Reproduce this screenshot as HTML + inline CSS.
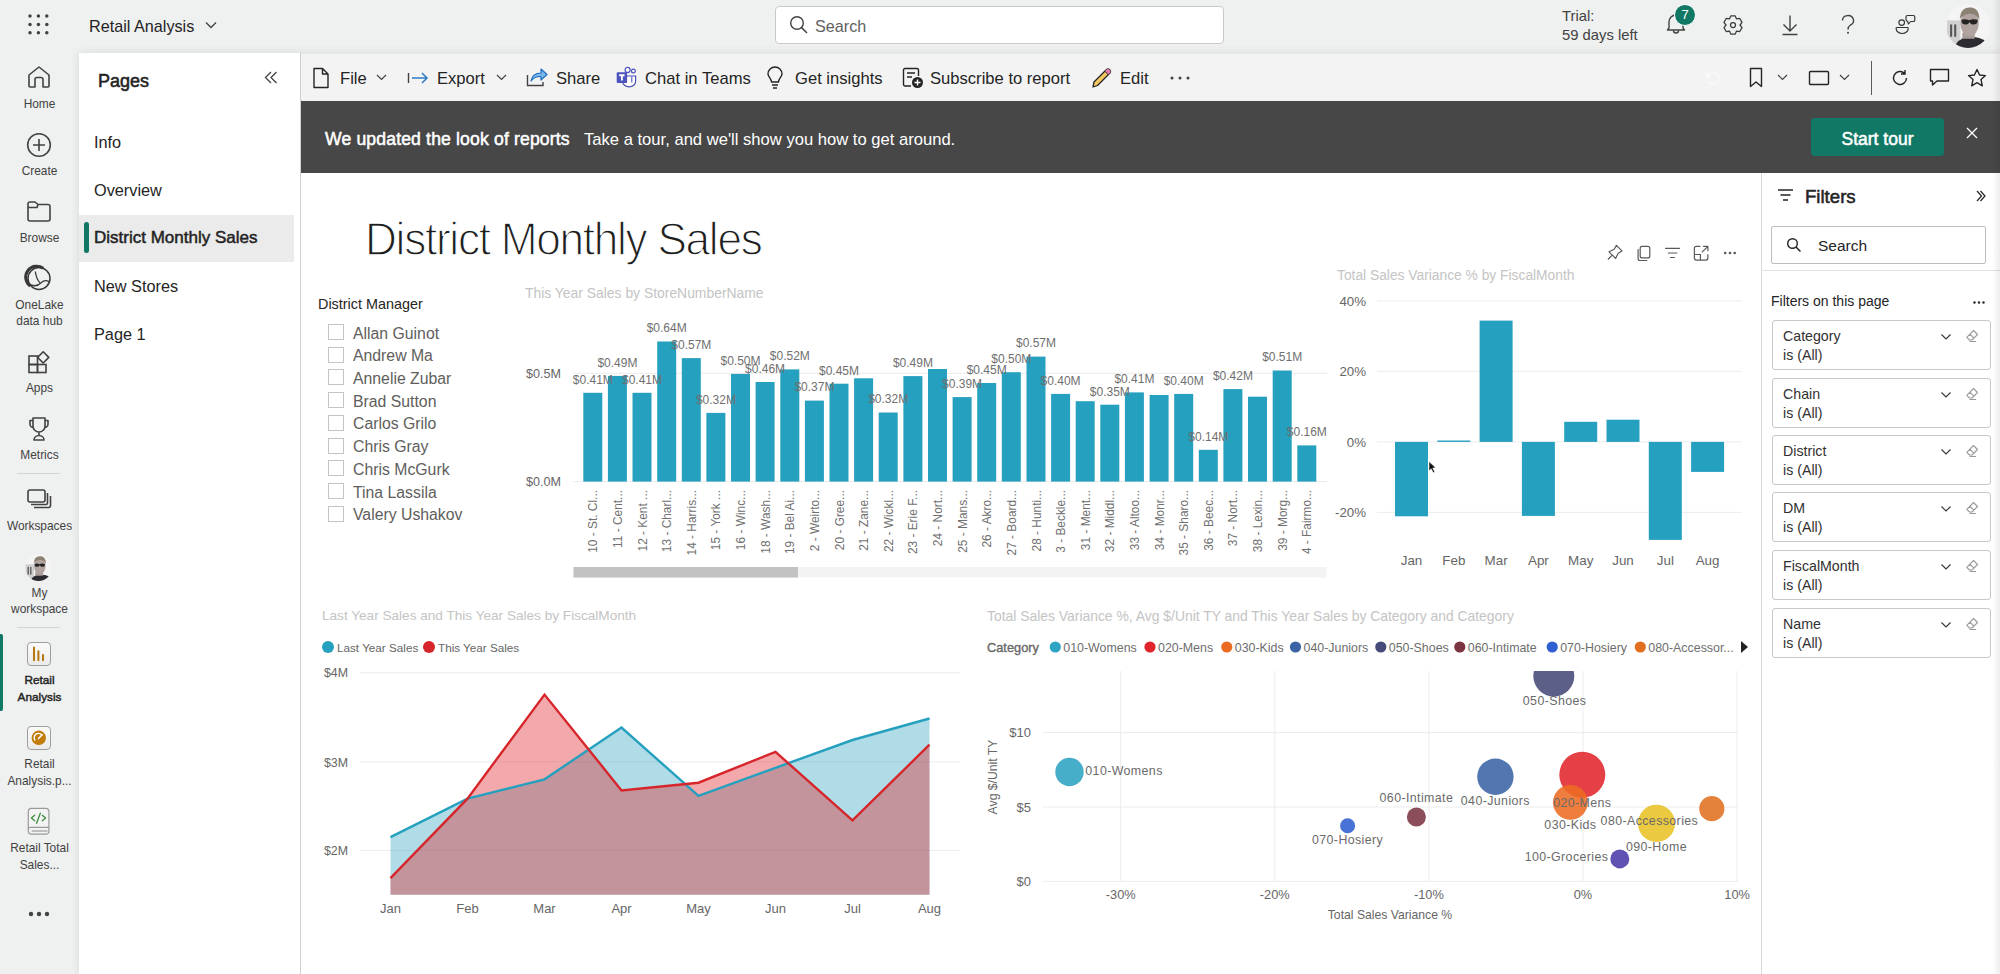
<!DOCTYPE html>
<html><head><meta charset="utf-8">
<style>
*{box-sizing:border-box;margin:0;padding:0}
html,body{width:2000px;height:974px;overflow:hidden;background:#eff0f0;font-family:"Liberation Sans",sans-serif;color:#242424}
.a{position:absolute;white-space:nowrap}
svg{position:absolute;overflow:visible}
#topbar{position:absolute;left:0;top:0;width:2000px;height:53px;background:#eff0f0}
#leftnav{position:absolute;left:0;top:53px;width:79px;height:921px;background:#eff0f0}
#pages{position:absolute;left:79px;top:53px;width:222px;height:921px;background:#fff}
#shadow{position:absolute;left:79px;top:53px;width:1921px;height:921px;box-shadow:0 0 9px rgba(0,0,0,.10)}
#divider{position:absolute;left:300px;top:53px;width:1.5px;height:921px;background:#d0d0d0}
#toolbar{position:absolute;left:301px;top:53px;width:1699px;height:47px;background:#f3f3f3;border-top:1px solid #e6e6e6}
#banner{position:absolute;left:301px;top:101px;width:1699px;height:72px;background:#474747}
#canvas{position:absolute;left:301px;top:173px;width:1460px;height:801px;background:#fff}
#filters{position:absolute;left:1761px;top:173px;width:239px;height:801px;background:#fff;border-left:1px solid #d9d9d9}
.nl{margin-top:0.8px;font-size:11.9px;color:#424242;text-align:center;width:79px;left:0;line-height:16px}
.pg{font-size:16.3px;color:#242424;left:94px}
.tb{font-size:16.6px;color:#242424;top:69px}
.fc{position:absolute;left:1772px;width:219px;height:50px;border:1px solid #c8c8c8;border-radius:3px;background:#fff}
.fc .t1{position:absolute;left:10px;top:7px;font-size:14.2px;color:#323130}
.fc .t2{position:absolute;left:10px;top:26px;font-size:14.2px;color:#323130}
.sl{font-size:15.8px;color:#605e5c;left:353px}
.cb{position:absolute;left:328px;width:16px;height:16px;border:1px solid #c4c4c4;background:#fff}
.ax{font-size:13px;color:#666;font-family:"Liberation Sans",sans-serif}
.dl{font-size:12.5px;fill:#666}
.vt{font-size:13.9px;color:#c2c2c2}
</style></head><body>
<div id="topbar"></div>
<div id="leftnav"></div>
<div id="shadow"></div>
<div id="pages"></div>
<div id="divider"></div>
<div id="toolbar"></div>
<div id="banner"></div>
<div id="canvas"></div>
<div id="filters"></div>

<!-- TOP BAR -->
<svg style="left:28px;top:14px" width="21" height="21" viewBox="0 0 21 21" fill="#424242"><circle cx="2.0" cy="2.0" r="1.75"/><circle cx="10.4" cy="2.0" r="1.75"/><circle cx="18.8" cy="2.0" r="1.75"/><circle cx="2.0" cy="10.4" r="1.75"/><circle cx="10.4" cy="10.4" r="1.75"/><circle cx="18.8" cy="10.4" r="1.75"/><circle cx="2.0" cy="18.8" r="1.75"/><circle cx="10.4" cy="18.8" r="1.75"/><circle cx="18.8" cy="18.8" r="1.75"/></svg>
<div class="a" style="left:89px;top:17px;font-size:16.2px;color:#242424">Retail Analysis</div>
<svg style="left:205px;top:21px" width="12" height="8" viewBox="0 0 12 8"><path d="M1 1.5 L6 6.5 L11 1.5" fill="none" stroke="#424242" stroke-width="1.3"/></svg>
<div class="a" style="left:775px;top:6px;width:449px;height:38px;background:#fff;border:1px solid #c9c9c9;border-radius:4px"></div>
<svg style="left:789px;top:15px" width="20" height="20" viewBox="0 0 20 20"><circle cx="8" cy="8" r="6.3" fill="none" stroke="#424242" stroke-width="1.4"/><path d="M12.6 12.6 L18 18" stroke="#424242" stroke-width="1.5"/></svg>
<div class="a" style="left:815px;top:17px;font-size:16.2px;color:#616161">Search</div>
<div class="a" style="left:1562px;top:7px;font-size:14.8px;color:#424242;line-height:19px">Trial:<br>59 days left</div>

<!-- top right icons -->
<svg style="left:1664px;top:11px" width="24" height="24" viewBox="0 0 24 24"><path d="M5 17 V11 a7 7 0 0 1 14 0 V17 L20.5 19 H3.5 Z" fill="none" stroke="#424242" stroke-width="1.4" stroke-linejoin="round"/><path d="M9.5 19.5 a2.5 2.5 0 0 0 5 0" fill="none" stroke="#424242" stroke-width="1.4"/></svg>
<div class="a" style="left:1674px;top:3.5px;width:22px;height:22px;border-radius:50%;background:#117865;border:1.5px solid #fff;color:#fff;font-size:13px;text-align:center;line-height:19px">7</div>
<svg style="left:1721px;top:12.5px" width="24" height="24" viewBox="0 0 24 24"><path d="M8.50 5.94 L9.73 2.88 L14.27 2.88 L15.50 5.94 L18.76 5.47 L21.04 9.41 L19.00 12.00 L21.04 14.59 L18.76 18.53 L15.50 18.06 L14.27 21.12 L9.73 21.12 L8.50 18.06 L5.24 18.53 L2.96 14.59 L5.00 12.00 L2.96 9.41 L5.24 5.47 Z" fill="none" stroke="#3a3a3a" stroke-width="1.25" stroke-linejoin="round"/><circle cx="12" cy="12" r="2.5" fill="none" stroke="#3a3a3a" stroke-width="1.25"/></svg>
<svg style="left:1781px;top:14px" width="18" height="22" viewBox="0 0 18 22"><path d="M9 1.5 V17 M2.5 10.5 L9 17 L15.5 10.5 M1.5 20.5 H16.5" fill="none" stroke="#424242" stroke-width="1.4"/></svg>
<svg style="left:1840px;top:15px" width="16" height="20" viewBox="0 0 16 20"><path d="M2.5 5.5 a5.5 5 0 1 1 8 4.5 c-2 1.2 -2.5 2 -2.5 4.5" fill="none" stroke="#424242" stroke-width="1.4"/><circle cx="8" cy="17.8" r="1" fill="#424242"/></svg>
<svg style="left:1894px;top:13px" width="24" height="24" viewBox="0 0 24 24"><g fill="none" stroke="#333" stroke-width="1.15" stroke-linejoin="round"><circle cx="7.7" cy="9.6" r="2.8"/><path d="M3 14.5 H13.3 a.9 .9 0 0 1 .9 .9 C14.2 18.3 11.6 20.5 8.2 20.5 C4.8 20.5 2.1 18.3 2.1 15.4 a.9 .9 0 0 1 .9 -.9 Z"/><path d="M13.6 2.5 H19.2 a1.6 1.6 0 0 1 1.6 1.6 V6.9 a1.6 1.6 0 0 1 -1.6 1.6 H16.6 L14.5 11 L13.6 8.3 a1.7 1.7 0 0 1 -1.6 -1.7 V4.1 a1.6 1.6 0 0 1 1.6 -1.6 Z"/></g></svg>
<svg style="left:1946px;top:4px" width="43" height="43" viewBox="0 0 42 42"><defs><clipPath id="av"><circle cx="21.5" cy="21.5" r="21.5"/></clipPath></defs><g clip-path="url(#av)"><rect width="42" height="42" fill="#f4f4f4"/><rect x="1" y="16" width="13" height="26" fill="#d0d0d0"/><rect x="4" y="20" width="2" height="12" fill="#555"/><rect x="8" y="20" width="2" height="12" fill="#555"/><path d="M8 44 Q10 34 22 32 Q34 32 40 37 V44 Z" fill="#2b2b30"/><path d="M16 34 V28 H28 V34 Z" fill="#a89c98"/><ellipse cx="23" cy="19" rx="9" ry="12.5" fill="#b0a3a0"/><path d="M13.5 15 Q14 3 24 3.5 Q33 4 32.5 16 Q30 9 23 9.5 Q16 10 13.5 15 Z" fill="#8c8274"/><path d="M15 15.5 Q18.5 14 22.5 15.8 Q26.5 14 31 15.5 Q31 20 27.5 20 Q24 20 23 17.5 Q22 20 18.5 20 Q15 20 15 15.5 Z" fill="#242424"/></g></svg>

<!-- LEFT NAV -->
<svg style="left:27px;top:65px" width="24" height="24" viewBox="0 0 24 24"><path d="M2 10 L12 2 L22 10 V21 a1 1 0 0 1 -1 1 H16 V14.5 a2 2 0 0 0 -2 -2 H10 a2 2 0 0 0 -2 2 V22 H3 a1 1 0 0 1 -1 -1 Z" fill="none" stroke="#424242" stroke-width="1.6" stroke-linejoin="round"/></svg>
<div class="a nl" style="top:95px">Home</div>
<svg style="left:26px;top:132px" width="26" height="26" viewBox="0 0 26 26"><circle cx="13" cy="13" r="11.3" fill="none" stroke="#424242" stroke-width="1.6"/><path d="M13 7 V19 M7 13 H19" stroke="#424242" stroke-width="1.6"/></svg>
<div class="a nl" style="top:162px">Create</div>
<svg style="left:26px;top:199px" width="26" height="24" viewBox="0 0 26 24"><path d="M2 5 a2 2 0 0 1 2 -2 H9 L12 5.5 H22 a2 2 0 0 1 2 2 V20 a2 2 0 0 1 -2 2 H4 a2 2 0 0 1 -2 -2 Z M2 8.5 H11 L12 5.5" fill="none" stroke="#424242" stroke-width="1.6" stroke-linejoin="round"/></svg>
<div class="a nl" style="top:229px">Browse</div>
<svg style="left:26px;top:265px" width="26" height="26" viewBox="0 0 26 26"><g fill="none" stroke="#383838"><circle cx="13" cy="13.5" r="11" stroke-width="1.5"/><path d="M4.2 21 A10 10 0 0 1 17.2 3.3" stroke-width="3"/><path d="M9.3 6.5 C10 11 11.5 15.5 14 17.8" stroke-width="1.3"/><path d="M4.5 19.6 C9 22 13 20 15.5 17.5 C17.5 15.5 20 15 23.3 16.8" stroke-width="1.3"/></g></svg>
<div class="a nl" style="top:296px">OneLake</div>
<div class="a nl" style="top:312px">data hub</div>
<svg style="left:27px;top:350px" width="24" height="24" viewBox="0 0 24 24"><path d="M2 8 H10.5 V12 H2 Z" fill="none"/><rect x="2" y="6" width="8.5" height="8.5" fill="none" stroke="#424242" stroke-width="1.6"/><rect x="2" y="14.5" width="8.5" height="8" fill="none" stroke="#424242" stroke-width="1.6"/><rect x="10.5" y="14.5" width="8.5" height="8" fill="none" stroke="#424242" stroke-width="1.6"/><path d="M16.2 1.8 L21.8 7.4 L16.2 13 L10.6 7.4 Z" fill="none" stroke="#424242" stroke-width="1.6" stroke-linejoin="round"/></svg>
<div class="a nl" style="top:379px">Apps</div>
<svg style="left:27px;top:416px" width="24" height="26" viewBox="0 0 24 26"><path d="M6 2 H18 V10 a6 6 0 0 1 -12 0 Z M6 4.5 H3 V8 a3.5 3.5 0 0 0 3.5 3.5 M18 4.5 H21 V8 a3.5 3.5 0 0 1 -3.5 3.5 M12 16 V19.5 M7 24 a5 4.5 0 0 1 10 0 Z" fill="none" stroke="#424242" stroke-width="1.6" stroke-linejoin="round"/></svg>
<div class="a nl" style="top:446px">Metrics</div>
<div class="a" style="left:17px;top:473px;width:43px;height:1px;background:#d4d4d4"></div>
<svg style="left:26px;top:487px" width="26" height="24" viewBox="0 0 26 24"><rect x="2" y="3" width="17" height="12" rx="2" fill="none" stroke="#424242" stroke-width="1.6"/><path d="M21.5 6 V16 a1.5 1.5 0 0 1 -1.5 1.5 H5 M24.5 9 V18.5 a2 2 0 0 1 -2 2 H8" fill="none" stroke="#424242" stroke-width="1.6"/></svg>
<div class="a nl" style="top:517px">Workspaces</div>
<svg style="left:25px;top:554px" width="27" height="27" viewBox="0 0 42 42"><defs><clipPath id="av2"><circle cx="21" cy="21" r="21"/></clipPath></defs><g clip-path="url(#av2)"><rect width="42" height="42" fill="#f4f4f4"/><rect x="1" y="16" width="13" height="26" fill="#d0d0d0"/><rect x="4" y="20" width="2" height="12" fill="#555"/><rect x="8" y="20" width="2" height="12" fill="#555"/><path d="M8 44 Q10 34 22 32 Q34 32 40 37 V44 Z" fill="#2b2b30"/><path d="M16 34 V28 H28 V34 Z" fill="#a89c98"/><ellipse cx="23" cy="19" rx="9" ry="12.5" fill="#b0a3a0"/><path d="M13.5 15 Q14 3 24 3.5 Q33 4 32.5 16 Q30 9 23 9.5 Q16 10 13.5 15 Z" fill="#8c8274"/><path d="M15 15.5 Q18.5 14 22.5 15.8 Q26.5 14 31 15.5 Q31 20 27.5 20 Q24 20 23 17.5 Q22 20 18.5 20 Q15 20 15 15.5 Z" fill="#242424"/></g></svg>
<div class="a nl" style="top:584px">My</div>
<div class="a nl" style="top:600px">workspace</div>
<div class="a" style="left:17px;top:627px;width:43px;height:1px;background:#d4d4d4"></div>
<div class="a" style="left:0;top:634px;width:2.5px;height:77px;background:#117865;border-radius:0 2px 2px 0"></div>
<div class="a" style="left:27px;top:642px;width:23.5px;height:23.5px;border:1.2px solid #9e9e9e;border-radius:4px;background:linear-gradient(#fbfbfb,#ebebeb)"></div><svg style="left:27px;top:642px" width="24" height="24" viewBox="0 0 24 24"><path d="M7 5.6 V18.2 M11.4 9.2 V18.2 M16 13 V18.2" stroke="#b8760e" stroke-width="2" stroke-linecap="round"/></svg>
<div class="a nl" style="top:671px;-webkit-text-stroke:0.45px #242424;color:#242424;font-size:11.8px">Retail</div>
<div class="a nl" style="top:688px;-webkit-text-stroke:0.45px #242424;color:#242424;font-size:11.8px">Analysis</div>
<div class="a" style="left:27px;top:726px;width:23.5px;height:23.5px;border:1.2px solid #9e9e9e;border-radius:4px;background:linear-gradient(#fbfbfb,#ebebeb)"></div><svg style="left:27px;top:726px" width="24" height="24" viewBox="0 0 24 24"><circle cx="11.8" cy="11.8" r="7.2" fill="#c27d0c"/><path d="M8.2 14.5 a4.3 4.3 0 0 1 6.6 -5.6" fill="none" stroke="#fff" stroke-width="1.4"/><path d="M11.5 12.5 L15.2 8.8" stroke="#fff" stroke-width="1.5" stroke-linecap="round"/></svg>
<div class="a nl" style="top:755px">Retail</div>
<div class="a nl" style="top:772px">Analysis.p...</div>
<svg style="left:26px;top:806px" width="26" height="30" viewBox="0 0 26 30"><rect x="2.3" y="2.4" width="20.6" height="25.8" rx="3.2" fill="#f3f3f3" stroke="#9a9a9a" stroke-width="1.2"/><path d="M2.3 22.5 Q2.5 21.3 4.5 21.3 H22.9" fill="none" stroke="#9a9a9a" stroke-width="1.2"/><path d="M5.8 25 H21.5" stroke="#9a9a9a" stroke-width="1.2"/><path d="M8.7 9.3 L5.4 12 L8.7 14.7 M16.3 9.3 L19.6 12 L16.3 14.7 M14.3 7.2 L10.6 17.3" fill="none" stroke="#3c8c3c" stroke-width="1.3" stroke-linecap="round" stroke-linejoin="round"/></svg>
<div class="a nl" style="top:839px">Retail Total</div>
<div class="a nl" style="top:856px">Sales...</div>
<svg style="left:28px;top:910px" width="22" height="8" viewBox="0 0 22 8"><circle cx="3" cy="4" r="2.2" fill="#424242"/><circle cx="11" cy="4" r="2.2" fill="#424242"/><circle cx="19" cy="4" r="2.2" fill="#424242"/></svg>

<!-- PAGES PANEL -->
<div class="a" style="left:98px;top:71px;font-size:18px;-webkit-text-stroke:0.55px #242424;color:#242424">Pages</div>
<svg style="left:264px;top:71px" width="14" height="13" viewBox="0 0 14 13"><path d="M7 1 L1.5 6.5 L7 12 M12.5 1 L7 6.5 L12.5 12" fill="none" stroke="#424242" stroke-width="1.3"/></svg>
<div class="a pg" style="top:133px">Info</div>
<div class="a pg" style="top:181px">Overview</div>
<div class="a" style="left:79px;top:215px;width:215px;height:47px;background:#ebebeb"></div>
<div class="a" style="left:84px;top:222px;width:5px;height:31px;background:#117865;border-radius:3px"></div>
<div class="a pg" style="top:228px;font-size:17px;-webkit-text-stroke:0.5px #242424">District Monthly Sales</div>
<div class="a pg" style="top:277px">New Stores</div>
<div class="a pg" style="top:325px">Page 1</div>

<!-- TOOLBAR -->
<svg style="left:312px;top:67px" width="18" height="22" viewBox="0 0 18 22"><path d="M2 1.5 H10.5 L16 7 V20.5 H2 Z M10.5 1.5 V7 H16" fill="none" stroke="#242424" stroke-width="1.4" stroke-linejoin="round"/></svg>
<div class="a tb" style="left:340px">File</div>
<svg style="left:376px;top:74px" width="11" height="7" viewBox="0 0 11 7"><path d="M1 1 L5.5 5.5 L10 1" fill="none" stroke="#424242" stroke-width="1.2"/></svg>
<svg style="left:407px;top:70px" width="22" height="16" viewBox="0 0 22 16"><path d="M1.5 3 V13" stroke="#424242" stroke-width="1.4"/><path d="M5 8 H20 M15 3 L20 8 L15 13" fill="none" stroke="#2f7cc4" stroke-width="1.5"/></svg>
<div class="a tb" style="left:437px">Export</div>
<svg style="left:496px;top:74px" width="11" height="7" viewBox="0 0 11 7"><path d="M1 1 L5.5 5.5 L10 1" fill="none" stroke="#424242" stroke-width="1.2"/></svg>
<svg style="left:526px;top:67px" width="22" height="20" viewBox="0 0 22 20"><path d="M1.5 8 V18.5 H17 V15" fill="none" stroke="#424242" stroke-width="1.4"/><path d="M5 14 C6 8 10 6 15 6 V2 L21 7.5 L15 13 V9.5 C10 9.5 7 11 5 14 Z" fill="#7bb8ea" stroke="#1f6fc0" stroke-width="1.2" stroke-linejoin="round"/></svg>
<div class="a tb" style="left:556px">Share</div>
<svg style="left:615px;top:66px" width="22" height="22" viewBox="0 0 22 22"><circle cx="12.6" cy="3.9" r="2.5" fill="#fff" stroke="#4b53bc" stroke-width="1.2"/><circle cx="18.4" cy="5" r="1.9" fill="#fff" stroke="#4b53bc" stroke-width="1.2"/><path d="M7.5 10 H20.6 V15.5 a6.5 5.3 0 0 1 -13 0 Z" fill="#fff" stroke="#4b53bc" stroke-width="1.2"/><path d="M16.8 10.5 V16.5" stroke="#4b53bc" stroke-width="1.1"/><rect x="1.7" y="6.2" width="10.4" height="10.8" rx="1" fill="#4b53bc"/><path d="M4.2 9.2 H9.6 M6.9 9.2 V14.6" stroke="#fff" stroke-width="1.9"/></svg>
<div class="a tb" style="left:645px">Chat in Teams</div>
<svg style="left:766px;top:67px" width="18" height="22" viewBox="0 0 18 22"><path d="M5.5 15 C5.5 11.5 2 10 2 7 a7 7 0 0 1 14 0 c0 3 -3.5 4.5 -3.5 8 Z M6 18 H12 M7 21 H11" fill="none" stroke="#242424" stroke-width="1.4" stroke-linejoin="round"/></svg>
<div class="a tb" style="left:795px">Get insights</div>
<svg style="left:902px;top:67px" width="22" height="22" viewBox="0 0 22 22"><path d="M9 19 H3 a1.5 1.5 0 0 1 -1.5 -1.5 V3 a1.5 1.5 0 0 1 1.5 -1.5 H15 a1.5 1.5 0 0 1 1.5 1.5 V9 M5 6 H13 M5 10 H10" fill="none" stroke="#242424" stroke-width="1.4"/><circle cx="15.5" cy="15.5" r="5.5" fill="#242424"/><path d="M15.5 12.5 V18.5 M12.5 15.5 H18.5" stroke="#fff" stroke-width="1.4"/></svg>
<div class="a tb" style="left:930px">Subscribe to report</div>
<svg style="left:1091px;top:67px" width="22" height="22" viewBox="0 0 22 22"><path d="M2 20 L3 15 L15.5 2.5 a2.5 2.5 0 0 1 3.5 3.5 L6.5 18.5 Z" fill="#f7c862" stroke="#242424" stroke-width="1.3" stroke-linejoin="round"/><path d="M14 4 L17.5 7.5" stroke="#242424" stroke-width="1.3"/><path d="M15.5 2.5 a2.5 2.5 0 0 1 3.5 3.5 L17.5 7.5 L14 4 Z" fill="#e07bb0"/></svg>
<div class="a tb" style="left:1120px">Edit</div>
<svg style="left:1170px;top:76px" width="20" height="4" viewBox="0 0 20 4"><circle cx="2" cy="2" r="1.5" fill="#424242"/><circle cx="10" cy="2" r="1.5" fill="#424242"/><circle cx="18" cy="2" r="1.5" fill="#424242"/></svg>

<svg style="left:1705px;top:70px" width="16" height="16" viewBox="0 0 16 16"><path d="M2 2.5 L1.5 7 L6 6.5 M2 6.5 a6 6 0 1 1 1 5" fill="none" stroke="#fafafa" stroke-width="1.2"/></svg>
<svg style="left:1749px;top:67px" width="14" height="21" viewBox="0 0 14 21"><path d="M1.5 1.5 H12.5 V19.5 L7 15 L1.5 19.5 Z" fill="none" stroke="#242424" stroke-width="1.4" stroke-linejoin="round"/></svg>
<svg style="left:1777px;top:74px" width="11" height="7" viewBox="0 0 11 7"><path d="M1 1 L5.5 5.5 L10 1" fill="none" stroke="#424242" stroke-width="1.2"/></svg>
<svg style="left:1808px;top:70px" width="22" height="16" viewBox="0 0 22 16"><rect x="1.5" y="1.5" width="19" height="13" rx="1" fill="none" stroke="#242424" stroke-width="1.4"/></svg>
<svg style="left:1839px;top:74px" width="11" height="7" viewBox="0 0 11 7"><path d="M1 1 L5.5 5.5 L10 1" fill="none" stroke="#424242" stroke-width="1.2"/></svg>
<div class="a" style="left:1870.5px;top:61px;width:1.2px;height:34px;background:#5a5a5a"></div>
<svg style="left:1891px;top:69px" width="18" height="18" viewBox="0 0 18 18"><path d="M15.5 9 a6.5 6.5 0 1 1 -2 -4.7 M14 1 V5 H10" fill="none" stroke="#242424" stroke-width="1.4"/></svg>
<svg style="left:1929px;top:68px" width="21" height="19" viewBox="0 0 21 19"><path d="M1.5 1.5 H19.5 V13 H8 L3.5 17 V13 H1.5 Z" fill="none" stroke="#242424" stroke-width="1.4" stroke-linejoin="round"/></svg>
<svg style="left:1967px;top:68px" width="20" height="20" viewBox="0 0 20 20"><path d="M10 1.5 L12.6 7 L18.5 7.6 L14 11.6 L15.3 17.8 L10 14.7 L4.7 17.8 L6 11.6 L1.5 7.6 L7.4 7 Z" fill="none" stroke="#242424" stroke-width="1.4" stroke-linejoin="round"/></svg>

<!-- BANNER -->
<div class="a" style="left:325px;top:129px;font-size:17.6px;letter-spacing:0.15px;-webkit-text-stroke:0.5px #fff;color:#fff">We updated the look of reports</div>
<div class="a" style="left:584px;top:130px;font-size:16.6px;color:#fff">Take a tour, and we'll show you how to get around.</div>
<div class="a" style="left:1811px;top:118px;width:133px;height:38px;background:#117865;border-radius:4px;color:#fff;font-size:17.5px;-webkit-text-stroke:0.5px #fff;text-align:center;line-height:42px">Start tour</div>
<svg style="left:1966px;top:127px" width="12" height="12" viewBox="0 0 12 12"><path d="M1 1 L11 11 M11 1 L1 11" stroke="#fff" stroke-width="1.3"/></svg>

<!-- FILTERS -->
<svg style="left:1777px;top:188px" width="17" height="14" viewBox="0 0 17 14"><path d="M1 2 H16 M3.5 7 H13.5 M6 12 H11" stroke="#242424" stroke-width="1.6"/></svg>
<div class="a" style="left:1805px;top:186px;font-size:18.6px;-webkit-text-stroke:0.55px #242424;color:#242424">Filters</div>
<svg style="left:1976px;top:190px" width="10" height="12" viewBox="0 0 10 12"><path d="M1 1 L5.5 6 L1 11 M4.5 1 L9 6 L4.5 11" fill="none" stroke="#242424" stroke-width="1.2"/></svg>
<div class="a" style="left:1771px;top:226px;width:215px;height:38px;border:1px solid #bdbdbd;border-radius:2px;background:#fff"></div>
<svg style="left:1786px;top:237px" width="16" height="16" viewBox="0 0 16 16"><circle cx="6.5" cy="6.5" r="4.8" fill="none" stroke="#242424" stroke-width="1.4"/><path d="M10 10 L14.5 14.5" stroke="#242424" stroke-width="1.5"/></svg>
<div class="a" style="left:1818px;top:237px;font-size:15.5px;color:#242424">Search</div>
<div class="a" style="left:1761px;top:270px;width:239px;height:1px;background:#e1e1e1"></div>
<div class="a" style="left:1771px;top:293px;font-size:14px;color:#242424">Filters on this page</div>
<svg style="left:1973px;top:301px" width="12" height="3" viewBox="0 0 12 3"><circle cx="1.5" cy="1.5" r="1.2" fill="#242424"/><circle cx="6" cy="1.5" r="1.2" fill="#242424"/><circle cx="10.5" cy="1.5" r="1.2" fill="#242424"/></svg>
<div class="fc" style="top:320px"><div class="t1 a">Category</div><div class="t2 a">is (All)</div><svg style="left:167px;top:12px" width="12" height="8" viewBox="0 0 12 8"><path d="M1.5 1.5 L6 6 L10.5 1.5" fill="none" stroke="#333" stroke-width="1.1"/></svg><svg style="left:192px;top:8px" width="14" height="14" viewBox="0 0 14 14"><path d="M8.5 1.5 L12.5 5.5 L7 11 H4.5 L1.8 8.3 Z M4.8 5.2 L8.8 9.2 M4.5 12.5 H11" fill="none" stroke="#9a9a9a" stroke-width="1.1" stroke-linejoin="round"/></svg></div>
<div class="fc" style="top:378px"><div class="t1 a">Chain</div><div class="t2 a">is (All)</div><svg style="left:167px;top:12px" width="12" height="8" viewBox="0 0 12 8"><path d="M1.5 1.5 L6 6 L10.5 1.5" fill="none" stroke="#333" stroke-width="1.1"/></svg><svg style="left:192px;top:8px" width="14" height="14" viewBox="0 0 14 14"><path d="M8.5 1.5 L12.5 5.5 L7 11 H4.5 L1.8 8.3 Z M4.8 5.2 L8.8 9.2 M4.5 12.5 H11" fill="none" stroke="#9a9a9a" stroke-width="1.1" stroke-linejoin="round"/></svg></div>
<div class="fc" style="top:435px"><div class="t1 a">District</div><div class="t2 a">is (All)</div><svg style="left:167px;top:12px" width="12" height="8" viewBox="0 0 12 8"><path d="M1.5 1.5 L6 6 L10.5 1.5" fill="none" stroke="#333" stroke-width="1.1"/></svg><svg style="left:192px;top:8px" width="14" height="14" viewBox="0 0 14 14"><path d="M8.5 1.5 L12.5 5.5 L7 11 H4.5 L1.8 8.3 Z M4.8 5.2 L8.8 9.2 M4.5 12.5 H11" fill="none" stroke="#9a9a9a" stroke-width="1.1" stroke-linejoin="round"/></svg></div>
<div class="fc" style="top:492px"><div class="t1 a">DM</div><div class="t2 a">is (All)</div><svg style="left:167px;top:12px" width="12" height="8" viewBox="0 0 12 8"><path d="M1.5 1.5 L6 6 L10.5 1.5" fill="none" stroke="#333" stroke-width="1.1"/></svg><svg style="left:192px;top:8px" width="14" height="14" viewBox="0 0 14 14"><path d="M8.5 1.5 L12.5 5.5 L7 11 H4.5 L1.8 8.3 Z M4.8 5.2 L8.8 9.2 M4.5 12.5 H11" fill="none" stroke="#9a9a9a" stroke-width="1.1" stroke-linejoin="round"/></svg></div>
<div class="fc" style="top:550px"><div class="t1 a">FiscalMonth</div><div class="t2 a">is (All)</div><svg style="left:167px;top:12px" width="12" height="8" viewBox="0 0 12 8"><path d="M1.5 1.5 L6 6 L10.5 1.5" fill="none" stroke="#333" stroke-width="1.1"/></svg><svg style="left:192px;top:8px" width="14" height="14" viewBox="0 0 14 14"><path d="M8.5 1.5 L12.5 5.5 L7 11 H4.5 L1.8 8.3 Z M4.8 5.2 L8.8 9.2 M4.5 12.5 H11" fill="none" stroke="#9a9a9a" stroke-width="1.1" stroke-linejoin="round"/></svg></div>
<div class="fc" style="top:608px"><div class="t1 a">Name</div><div class="t2 a">is (All)</div><svg style="left:167px;top:12px" width="12" height="8" viewBox="0 0 12 8"><path d="M1.5 1.5 L6 6 L10.5 1.5" fill="none" stroke="#333" stroke-width="1.1"/></svg><svg style="left:192px;top:8px" width="14" height="14" viewBox="0 0 14 14"><path d="M8.5 1.5 L12.5 5.5 L7 11 H4.5 L1.8 8.3 Z M4.8 5.2 L8.8 9.2 M4.5 12.5 H11" fill="none" stroke="#9a9a9a" stroke-width="1.1" stroke-linejoin="round"/></svg></div>
<div class="a" style="left:1992px;top:0;width:8px;height:974px;background:linear-gradient(to right,rgba(0,0,0,0),rgba(0,0,0,.07))"></div>
<!-- CHARTS -->
<div class="a" style="left:365.3px;top:211.8px;font-size:46.5px;letter-spacing:-1.35px;color:#1e1e1e;-webkit-text-stroke:1.3px #fff;transform:scaleX(0.95);transform-origin:0 0">District Monthly Sales</div>
<div class="a" style="left:318px;top:296px;font-size:14.4px;color:#252423">District Manager</div>
<div class="cb" style="top:324.0px"></div>
<div class="a sl" style="top:324.5px">Allan Guinot</div>
<div class="cb" style="top:346.7px"></div>
<div class="a sl" style="top:347.2px">Andrew Ma</div>
<div class="cb" style="top:369.4px"></div>
<div class="a sl" style="top:369.9px">Annelie Zubar</div>
<div class="cb" style="top:392.2px"></div>
<div class="a sl" style="top:392.7px">Brad Sutton</div>
<div class="cb" style="top:414.9px"></div>
<div class="a sl" style="top:415.4px">Carlos Grilo</div>
<div class="cb" style="top:437.6px"></div>
<div class="a sl" style="top:438.1px">Chris Gray</div>
<div class="cb" style="top:460.3px"></div>
<div class="a sl" style="top:460.8px">Chris McGurk</div>
<div class="cb" style="top:483.0px"></div>
<div class="a sl" style="top:483.5px">Tina Lassila</div>
<div class="cb" style="top:505.8px"></div>
<div class="a sl" style="top:506.3px">Valery Ushakov</div>
<svg style="left:0;top:0" width="2000" height="974" viewBox="0 0 2000 974" font-family="Liberation Sans, sans-serif">
<text x="525" y="298" font-size="13.9" fill="#c4c4c4">This Year Sales by StoreNumberName</text>
<line x1="573" y1="373.3" x2="1327" y2="373.3" stroke="#ececec" stroke-width="1"/>
<line x1="573" y1="481.6" x2="1327" y2="481.6" stroke="#ececec" stroke-width="1"/>
<text x="561" y="377.8" font-size="12.6" fill="#666" text-anchor="end">$0.5M</text>
<text x="561" y="486.1" font-size="12.6" fill="#666" text-anchor="end">$0.0M</text>
<rect x="583.3" y="392.8" width="19" height="88.8" fill="#26a0bf"/>
<rect x="607.9" y="375.9" width="19" height="105.7" fill="#26a0bf"/>
<rect x="632.5" y="392.8" width="19" height="88.8" fill="#26a0bf"/>
<rect x="657.2" y="341.5" width="19" height="140.1" fill="#26a0bf"/>
<rect x="681.8" y="358.1" width="19" height="123.5" fill="#26a0bf"/>
<rect x="706.4" y="412.9" width="19" height="68.7" fill="#26a0bf"/>
<rect x="731.0" y="373.9" width="19" height="107.7" fill="#26a0bf"/>
<rect x="755.6" y="382.0" width="19" height="99.6" fill="#26a0bf"/>
<rect x="780.3" y="369.4" width="19" height="112.2" fill="#26a0bf"/>
<rect x="804.9" y="400.6" width="19" height="81.0" fill="#26a0bf"/>
<rect x="829.5" y="383.7" width="19" height="97.9" fill="#26a0bf"/>
<rect x="854.1" y="378.3" width="19" height="103.3" fill="#26a0bf"/>
<rect x="878.7" y="412.5" width="19" height="69.1" fill="#26a0bf"/>
<rect x="903.4" y="376.1" width="19" height="105.5" fill="#26a0bf"/>
<rect x="928.0" y="369.0" width="19" height="112.6" fill="#26a0bf"/>
<rect x="952.6" y="397.1" width="19" height="84.5" fill="#26a0bf"/>
<rect x="977.2" y="383.0" width="19" height="98.6" fill="#26a0bf"/>
<rect x="1001.8" y="372.2" width="19" height="109.4" fill="#26a0bf"/>
<rect x="1026.5" y="356.6" width="19" height="125.0" fill="#26a0bf"/>
<rect x="1051.1" y="393.9" width="19" height="87.7" fill="#26a0bf"/>
<rect x="1075.7" y="401.2" width="19" height="80.4" fill="#26a0bf"/>
<rect x="1100.3" y="404.7" width="19" height="76.9" fill="#26a0bf"/>
<rect x="1124.9" y="392.4" width="19" height="89.2" fill="#26a0bf"/>
<rect x="1149.6" y="395.0" width="19" height="86.6" fill="#26a0bf"/>
<rect x="1174.2" y="393.9" width="19" height="87.7" fill="#26a0bf"/>
<rect x="1198.8" y="449.8" width="19" height="31.8" fill="#26a0bf"/>
<rect x="1223.4" y="389.1" width="19" height="92.5" fill="#26a0bf"/>
<rect x="1248.0" y="396.7" width="19" height="84.9" fill="#26a0bf"/>
<rect x="1272.7" y="370.5" width="19" height="111.1" fill="#26a0bf"/>
<rect x="1297.3" y="445.4" width="19" height="36.2" fill="#26a0bf"/>
<text x="592.8" y="383.6" font-size="12" fill="#6f6f6f" text-anchor="middle">$0.41M</text>
<text transform="translate(597.3,490) rotate(-90)" font-size="11.9" fill="#707070" text-anchor="end">10 - St. Cl...</text>
<text x="617.4" y="366.7" font-size="12" fill="#6f6f6f" text-anchor="middle">$0.49M</text>
<text transform="translate(621.9,490) rotate(-90)" font-size="11.9" fill="#707070" text-anchor="end">11 - Cent...</text>
<text x="642.0" y="383.6" font-size="12" fill="#6f6f6f" text-anchor="middle">$0.41M</text>
<text transform="translate(646.5,490) rotate(-90)" font-size="11.9" fill="#707070" text-anchor="end">12 - Kent ...</text>
<text x="666.7" y="332.3" font-size="12" fill="#6f6f6f" text-anchor="middle">$0.64M</text>
<text transform="translate(671.2,490) rotate(-90)" font-size="11.9" fill="#707070" text-anchor="end">13 - Charl...</text>
<text x="691.3" y="348.9" font-size="12" fill="#6f6f6f" text-anchor="middle">$0.57M</text>
<text transform="translate(695.8,490) rotate(-90)" font-size="11.9" fill="#707070" text-anchor="end">14 - Harris...</text>
<text x="715.9" y="403.7" font-size="12" fill="#6f6f6f" text-anchor="middle">$0.32M</text>
<text transform="translate(720.4,490) rotate(-90)" font-size="11.9" fill="#707070" text-anchor="end">15 - York ...</text>
<text x="740.5" y="364.7" font-size="12" fill="#6f6f6f" text-anchor="middle">$0.50M</text>
<text transform="translate(745.0,490) rotate(-90)" font-size="11.9" fill="#707070" text-anchor="end">16 - Winc...</text>
<text x="765.1" y="372.8" font-size="12" fill="#6f6f6f" text-anchor="middle">$0.46M</text>
<text transform="translate(769.6,490) rotate(-90)" font-size="11.9" fill="#707070" text-anchor="end">18 - Wash...</text>
<text x="789.8" y="360.2" font-size="12" fill="#6f6f6f" text-anchor="middle">$0.52M</text>
<text transform="translate(794.3,490) rotate(-90)" font-size="11.9" fill="#707070" text-anchor="end">19 - Bel Ai...</text>
<text x="814.4" y="391.4" font-size="12" fill="#6f6f6f" text-anchor="middle">$0.37M</text>
<text transform="translate(818.9,490) rotate(-90)" font-size="11.9" fill="#707070" text-anchor="end">2 - Weirto...</text>
<text x="839.0" y="374.5" font-size="12" fill="#6f6f6f" text-anchor="middle">$0.45M</text>
<text transform="translate(843.5,490) rotate(-90)" font-size="11.9" fill="#707070" text-anchor="end">20 - Gree...</text>
<text transform="translate(868.1,490) rotate(-90)" font-size="11.9" fill="#707070" text-anchor="end">21 - Zane...</text>
<text x="888.2" y="403.3" font-size="12" fill="#6f6f6f" text-anchor="middle">$0.32M</text>
<text transform="translate(892.7,490) rotate(-90)" font-size="11.9" fill="#707070" text-anchor="end">22 - Wickl...</text>
<text x="912.9" y="366.9" font-size="12" fill="#6f6f6f" text-anchor="middle">$0.49M</text>
<text transform="translate(917.4,490) rotate(-90)" font-size="11.9" fill="#707070" text-anchor="end">23 - Erie F...</text>
<text transform="translate(942.0,490) rotate(-90)" font-size="11.9" fill="#707070" text-anchor="end">24 - Nort...</text>
<text x="962.1" y="387.9" font-size="12" fill="#6f6f6f" text-anchor="middle">$0.39M</text>
<text transform="translate(966.6,490) rotate(-90)" font-size="11.9" fill="#707070" text-anchor="end">25 - Mans...</text>
<text x="986.7" y="373.8" font-size="12" fill="#6f6f6f" text-anchor="middle">$0.45M</text>
<text transform="translate(991.2,490) rotate(-90)" font-size="11.9" fill="#707070" text-anchor="end">26 - Akro...</text>
<text x="1011.3" y="363.0" font-size="12" fill="#6f6f6f" text-anchor="middle">$0.50M</text>
<text transform="translate(1015.8,490) rotate(-90)" font-size="11.9" fill="#707070" text-anchor="end">27 - Board...</text>
<text x="1036.0" y="347.4" font-size="12" fill="#6f6f6f" text-anchor="middle">$0.57M</text>
<text transform="translate(1040.5,490) rotate(-90)" font-size="11.9" fill="#707070" text-anchor="end">28 - Hunti...</text>
<text x="1060.6" y="384.7" font-size="12" fill="#6f6f6f" text-anchor="middle">$0.40M</text>
<text transform="translate(1065.1,490) rotate(-90)" font-size="11.9" fill="#707070" text-anchor="end">3 - Beckle...</text>
<text transform="translate(1089.7,490) rotate(-90)" font-size="11.9" fill="#707070" text-anchor="end">31 - Ment...</text>
<text x="1109.8" y="395.5" font-size="12" fill="#6f6f6f" text-anchor="middle">$0.35M</text>
<text transform="translate(1114.3,490) rotate(-90)" font-size="11.9" fill="#707070" text-anchor="end">32 - Middl...</text>
<text x="1134.4" y="383.2" font-size="12" fill="#6f6f6f" text-anchor="middle">$0.41M</text>
<text transform="translate(1138.9,490) rotate(-90)" font-size="11.9" fill="#707070" text-anchor="end">33 - Altoo...</text>
<text transform="translate(1163.6,490) rotate(-90)" font-size="11.9" fill="#707070" text-anchor="end">34 - Monr...</text>
<text x="1183.7" y="384.7" font-size="12" fill="#6f6f6f" text-anchor="middle">$0.40M</text>
<text transform="translate(1188.2,490) rotate(-90)" font-size="11.9" fill="#707070" text-anchor="end">35 - Sharo...</text>
<text x="1208.3" y="440.6" font-size="12" fill="#6f6f6f" text-anchor="middle">$0.14M</text>
<text transform="translate(1212.8,490) rotate(-90)" font-size="11.9" fill="#707070" text-anchor="end">36 - Beec...</text>
<text x="1232.9" y="379.9" font-size="12" fill="#6f6f6f" text-anchor="middle">$0.42M</text>
<text transform="translate(1237.4,490) rotate(-90)" font-size="11.9" fill="#707070" text-anchor="end">37 - Nort...</text>
<text transform="translate(1262.0,490) rotate(-90)" font-size="11.9" fill="#707070" text-anchor="end">38 - Lexin...</text>
<text x="1282.2" y="361.3" font-size="12" fill="#6f6f6f" text-anchor="middle">$0.51M</text>
<text transform="translate(1286.7,490) rotate(-90)" font-size="11.9" fill="#707070" text-anchor="end">39 - Morg...</text>
<text x="1306.8" y="436.2" font-size="12" fill="#6f6f6f" text-anchor="middle">$0.16M</text>
<text transform="translate(1311.3,490) rotate(-90)" font-size="11.9" fill="#707070" text-anchor="end">4 - Fairmo...</text>
<rect x="573.5" y="567" width="753" height="10.5" fill="#f3f3f3"/>
<rect x="573.5" y="567" width="224.5" height="10.5" fill="#c2c2c2"/>
<text x="1337" y="280" font-size="13.8" fill="#c4c4c4">Total Sales Variance % by FiscalMonth</text>
<line x1="1377" y1="300.9" x2="1741.5" y2="300.9" stroke="#ececec" stroke-width="1"/>
<text x="1366" y="305.6" font-size="13.3" fill="#666" text-anchor="end">40%</text>
<line x1="1377" y1="371.4" x2="1741.5" y2="371.4" stroke="#ececec" stroke-width="1"/>
<text x="1366" y="376.1" font-size="13.3" fill="#666" text-anchor="end">20%</text>
<line x1="1377" y1="441.9" x2="1741.5" y2="441.9" stroke="#ececec" stroke-width="1"/>
<text x="1366" y="446.6" font-size="13.3" fill="#666" text-anchor="end">0%</text>
<line x1="1377" y1="512.4" x2="1741.5" y2="512.4" stroke="#ececec" stroke-width="1"/>
<text x="1366" y="517.1" font-size="13.3" fill="#666" text-anchor="end">-20%</text>
<rect x="1395.0" y="441.9" width="33" height="74.4" fill="#26a0bf"/>
<text x="1411.5" y="565.0" font-size="13.4" fill="#666" text-anchor="middle">Jan</text>
<rect x="1437.3" y="440.5" width="33" height="1.4" fill="#26a0bf"/>
<text x="1453.8" y="565.0" font-size="13.4" fill="#666" text-anchor="middle">Feb</text>
<rect x="1479.6" y="320.6" width="33" height="121.3" fill="#26a0bf"/>
<text x="1496.1" y="565.0" font-size="13.4" fill="#666" text-anchor="middle">Mar</text>
<rect x="1521.9" y="441.9" width="33" height="74.0" fill="#26a0bf"/>
<text x="1538.4" y="565.0" font-size="13.4" fill="#666" text-anchor="middle">Apr</text>
<rect x="1564.2" y="421.8" width="33" height="20.1" fill="#26a0bf"/>
<text x="1580.7" y="565.0" font-size="13.4" fill="#666" text-anchor="middle">May</text>
<rect x="1606.5" y="419.7" width="33" height="22.2" fill="#26a0bf"/>
<text x="1623.0" y="565.0" font-size="13.4" fill="#666" text-anchor="middle">Jun</text>
<rect x="1648.8" y="441.9" width="33" height="98.0" fill="#26a0bf"/>
<text x="1665.3" y="565.0" font-size="13.4" fill="#666" text-anchor="middle">Jul</text>
<rect x="1691.1" y="441.9" width="33" height="30.0" fill="#26a0bf"/>
<text x="1707.6" y="565.0" font-size="13.4" fill="#666" text-anchor="middle">Aug</text>
<g fill="none" stroke="#5a5a5a" stroke-width="1.2" stroke-linejoin="round" stroke-linecap="round">
<path d="M1616.4 245.3 L1622 250.9 L1618.2 253.2 L1615.6 258.4 L1609 251.8 L1614.2 249.2 Z M1612 255.3 L1608.3 259"/>
<rect x="1640.2" y="246.3" width="9.6" height="11.6" rx="2"/><path d="M1638.1 249.6 V258.5 a2 2 0 0 0 2 2 H1646.8"/>
<path d="M1665.6 248.4 H1679.4 M1668.2 253 H1676.8 M1670.5 257.5 H1674.5"/>
<path d="M1700 246.3 H1696.4 a2 2 0 0 0 -2 2 V258.1 a2 2 0 0 0 2 2 H1705.9 a2 2 0 0 0 2 -2 V254.5 M1694.4 254.5 H1700.4 V260.1 M1702.3 251.9 L1707.9 246.3 M1703.5 246.3 H1707.9 V250.7"/>
</g>
<circle cx="1725.2" cy="253" r="1.35" fill="#5a5a5a"/><circle cx="1730" cy="253" r="1.35" fill="#5a5a5a"/><circle cx="1734.7" cy="253" r="1.35" fill="#5a5a5a"/>
<path d="M1429 461.5 L1429 471 L1431.2 468.8 L1433.2 472.8 L1434.8 472 L1432.8 468 L1435.8 467.8 Z" fill="#111" stroke="#fff" stroke-width="0.6"/>
<text x="322" y="620" font-size="13.6" fill="#c4c4c4">Last Year Sales and This Year Sales by FiscalMonth</text>
<circle cx="328" cy="647" r="6" fill="#26a0bf"/><text x="337" y="651.5" font-size="11.7" fill="#666">Last Year Sales</text>
<circle cx="429" cy="647" r="6" fill="#d7262b"/><text x="438" y="651.5" font-size="11.7" fill="#666">This Year Sales</text>
<line x1="360" y1="672.8" x2="960" y2="672.8" stroke="#ececec" stroke-width="1"/>
<text x="348" y="677.4" font-size="12.4" fill="#666" text-anchor="end">$4M</text>
<line x1="360" y1="761.9" x2="960" y2="761.9" stroke="#ececec" stroke-width="1"/>
<text x="348" y="766.5" font-size="12.4" fill="#666" text-anchor="end">$3M</text>
<line x1="360" y1="850.4" x2="960" y2="850.4" stroke="#ececec" stroke-width="1"/>
<text x="348" y="855.0" font-size="12.4" fill="#666" text-anchor="end">$2M</text>
<polygon points="390.5,894.8 390.5,837.1 467.5,798.6 544.5,779.3 621.5,727.5 698.5,796.0 775.5,767.8 852.5,740.0 929.5,718.5 929.5,894.8" fill="#26a0bf" fill-opacity="0.37"/>
<polygon points="390.5,894.8 390.5,878.1 467.5,798.6 544.5,694.6 621.5,790.4 698.5,782.7 775.5,751.9 852.5,820.4 929.5,744.7 929.5,894.8" fill="#e0282e" fill-opacity="0.40"/>
<polyline points="390.5,837.1 467.5,798.6 544.5,779.3 621.5,727.5 698.5,796.0 775.5,767.8 852.5,740.0 929.5,718.5" fill="none" stroke="#26a0bf" stroke-width="2.4" stroke-linejoin="miter"/>
<polyline points="390.5,878.1 467.5,798.6 544.5,694.6 621.5,790.4 698.5,782.7 775.5,751.9 852.5,820.4 929.5,744.7" fill="none" stroke="#d7262b" stroke-width="2.4" stroke-linejoin="miter"/>
<text x="390.5" y="912.5" font-size="13" fill="#666" text-anchor="middle">Jan</text>
<text x="467.5" y="912.5" font-size="13" fill="#666" text-anchor="middle">Feb</text>
<text x="544.5" y="912.5" font-size="13" fill="#666" text-anchor="middle">Mar</text>
<text x="621.5" y="912.5" font-size="13" fill="#666" text-anchor="middle">Apr</text>
<text x="698.5" y="912.5" font-size="13" fill="#666" text-anchor="middle">May</text>
<text x="775.5" y="912.5" font-size="13" fill="#666" text-anchor="middle">Jun</text>
<text x="852.5" y="912.5" font-size="13" fill="#666" text-anchor="middle">Jul</text>
<text x="929.5" y="912.5" font-size="13" fill="#666" text-anchor="middle">Aug</text>
<text x="987" y="620.5" font-size="13.9" fill="#c4c4c4">Total Sales Variance %, Avg $/Unit TY and This Year Sales by Category and Category</text>
<text x="987" y="651.8" font-size="12.8" fill="#666" stroke="#666" stroke-width="0.35">Category</text>
<circle cx="1055.3" cy="647" r="5.6" fill="#2ea3c3"/><text x="1063.3" y="651.8" font-size="12.4" fill="#6e6e6e">010-Womens</text>
<circle cx="1150" cy="647" r="5.6" fill="#e0262c"/><text x="1158.0" y="651.8" font-size="12.4" fill="#6e6e6e">020-Mens</text>
<circle cx="1226.8" cy="647" r="5.6" fill="#ec6b23"/><text x="1234.8" y="651.8" font-size="12.4" fill="#6e6e6e">030-Kids</text>
<circle cx="1295.5" cy="647" r="5.6" fill="#3a63a5"/><text x="1303.5" y="651.8" font-size="12.4" fill="#6e6e6e">040-Juniors</text>
<circle cx="1380.8" cy="647" r="5.6" fill="#454a78"/><text x="1388.8" y="651.8" font-size="12.4" fill="#6e6e6e">050-Shoes</text>
<circle cx="1459.8" cy="647" r="5.6" fill="#7b3442"/><text x="1467.8" y="651.8" font-size="12.4" fill="#6e6e6e">060-Intimate</text>
<circle cx="1552.2" cy="647" r="5.6" fill="#2f5fd0"/><text x="1560.2" y="651.8" font-size="12.4" fill="#6e6e6e">070-Hosiery</text>
<circle cx="1640.3" cy="647" r="5.6" fill="#e07020"/><text x="1648.3" y="651.8" font-size="12.4" fill="#6e6e6e">080-Accessor...</text>
<path d="M1741 641 L1748 647 L1741 653 Z" fill="#222"/>
<line x1="1043" y1="732.6" x2="1738" y2="732.6" stroke="#ececec" stroke-width="1"/>
<text x="1031" y="737.2" font-size="13" fill="#666" text-anchor="end">$10</text>
<line x1="1043" y1="807.0" x2="1738" y2="807.0" stroke="#ececec" stroke-width="1"/>
<text x="1031" y="811.6" font-size="13" fill="#666" text-anchor="end">$5</text>
<line x1="1043" y1="881.4" x2="1738" y2="881.4" stroke="#ececec" stroke-width="1"/>
<text x="1031" y="886.0" font-size="13" fill="#666" text-anchor="end">$0</text>
<line x1="1120.7" y1="671" x2="1120.7" y2="881.4" stroke="#ececec" stroke-width="1"/>
<text x="1120.7" y="898.5" font-size="12.8" fill="#666" text-anchor="middle">-30%</text>
<line x1="1274.8" y1="671" x2="1274.8" y2="881.4" stroke="#ececec" stroke-width="1"/>
<text x="1274.8" y="898.5" font-size="12.8" fill="#666" text-anchor="middle">-20%</text>
<line x1="1428.9" y1="671" x2="1428.9" y2="881.4" stroke="#ececec" stroke-width="1"/>
<text x="1428.9" y="898.5" font-size="12.8" fill="#666" text-anchor="middle">-10%</text>
<line x1="1583.0" y1="671" x2="1583.0" y2="881.4" stroke="#ececec" stroke-width="1"/>
<text x="1583.0" y="898.5" font-size="12.8" fill="#666" text-anchor="middle">0%</text>
<line x1="1737.1" y1="671" x2="1737.1" y2="881.4" stroke="#ececec" stroke-width="1"/>
<text x="1737.1" y="898.5" font-size="12.8" fill="#666" text-anchor="middle">10%</text>
<text x="1390" y="918.5" font-size="12.2" fill="#666" text-anchor="middle">Total Sales Variance %</text>
<text transform="translate(997,777) rotate(-90)" font-size="12.2" fill="#666" text-anchor="middle">Avg $/Unit TY</text>
<defs><clipPath id="scl"><rect x="1043" y="671" width="720" height="230"/></clipPath></defs>
<g clip-path="url(#scl)" fill-opacity="0.88">
<circle cx="1069.5" cy="772" r="14.2" fill="#2ea3c3"/>
<circle cx="1553.8" cy="676" r="20.5" fill="#454a78"/>
<circle cx="1495.4" cy="776.7" r="18.2" fill="#3a63a5"/>
<circle cx="1582.3" cy="774.7" r="23" fill="#e0262c"/>
<circle cx="1570.4" cy="802.4" r="17.4" fill="#ec6b23"/>
<circle cx="1416.4" cy="817" r="9.5" fill="#7b3442"/>
<circle cx="1347.6" cy="825.7" r="7.5" fill="#2f5fd0"/>
<circle cx="1711.8" cy="808.7" r="12.6" fill="#e07020"/>
<circle cx="1656.5" cy="823.3" r="18.6" fill="#e8c225"/>
<circle cx="1619.8" cy="858.9" r="9.5" fill="#4a3aa8"/>
</g>
<text x="1554.6" y="705.0" font-size="12.4" fill="#6a6a6a" text-anchor="middle" letter-spacing="0.4">050-Shoes</text>
<text x="1085.3" y="774.5" font-size="12.4" fill="#6a6a6a" text-anchor="start" letter-spacing="0.4">010-Womens</text>
<text x="1416.4" y="801.7" font-size="12.4" fill="#6a6a6a" text-anchor="middle" letter-spacing="0.4">060-Intimate</text>
<text x="1495.4" y="804.9" font-size="12.4" fill="#6a6a6a" text-anchor="middle" letter-spacing="0.4">040-Juniors</text>
<text x="1582.3" y="806.9" font-size="12.4" fill="#6a6a6a" text-anchor="middle" letter-spacing="0.4">020-Mens</text>
<text x="1570.4" y="829.0" font-size="12.4" fill="#6a6a6a" text-anchor="middle" letter-spacing="0.4">030-Kids</text>
<text x="1649.4" y="824.7" font-size="12.4" fill="#6a6a6a" text-anchor="middle" letter-spacing="0.4">080-Accessories</text>
<text x="1347.6" y="843.6" font-size="12.4" fill="#6a6a6a" text-anchor="middle" letter-spacing="0.4">070-Hosiery</text>
<text x="1656.5" y="850.7" font-size="12.4" fill="#6a6a6a" text-anchor="middle" letter-spacing="0.4">090-Home</text>
<text x="1566.5" y="861.4" font-size="12.4" fill="#6a6a6a" text-anchor="middle" letter-spacing="0.4">100-Groceries</text>
</svg>
<!-- /CHARTS -->
</body></html>
